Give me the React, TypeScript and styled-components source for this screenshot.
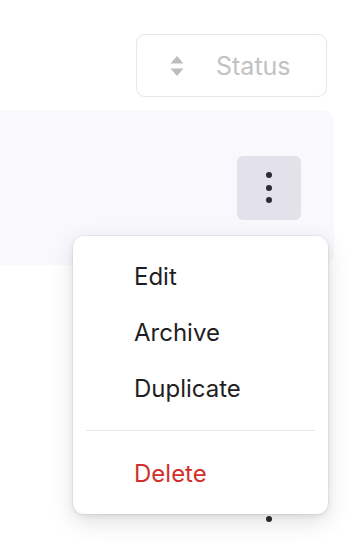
import React from "react";
import styled, { createGlobalStyle } from "styled-components";

const GlobalStyle = createGlobalStyle`
    body {
        margin: 0;
        background: #ffffff;
        font-family: Inter, "Noto Sans", sans-serif;
    }
`;

const MENU_ITEMS = ["Edit", "Archive", "Duplicate"];

const SortIcon = () => (
    <svg width="16" height="24" viewBox="0 0 16 24">
        <path d="M8 2 L14.5 9.5 H1.5 Z" fill="#bdbdbd" />
        <path d="M8 22 L14.5 14.5 H1.5 Z" fill="#bdbdbd" />
    </svg>
);

const App = () => {
    return (
        <React.Fragment>
            <GlobalStyle />
            <Page>
                <Toolbar>
                    <StatusButton type="button">
                        <SortIcon />
                        <span>Status</span>
                    </StatusButton>
                </Toolbar>

                <RowList>
                    <Row $active>
                        <KebabWrap>
                            <KebabButton type="button" $active aria-label="Row actions">
                                <Dot />
                                <Dot />
                                <Dot />
                            </KebabButton>
                            <Menu>
                                {MENU_ITEMS.map((label) => (
                                    <MenuItem key={label}>{label}</MenuItem>
                                ))}
                                <Separator />
                                <MenuItem $danger>Delete</MenuItem>
                            </Menu>
                        </KebabWrap>
                    </Row>
                    <Row>
                        <KebabWrap>
                            <KebabButton type="button" aria-label="Row actions">
                                <Dot />
                                <Dot />
                                <Dot />
                            </KebabButton>
                        </KebabWrap>
                    </Row>
                </RowList>
            </Page>
        </React.Fragment>
    );
};

export default App;

const Page = styled.div`
    width: 364px;
    height: 552px;
    overflow: hidden;
    padding-top: 34px;
    box-sizing: border-box;
`;

const Toolbar = styled.div`
    display: flex;
    justify-content: flex-end;
    padding-right: 37px;
`;

const StatusButton = styled.button`
    display: flex;
    align-items: center;
    gap: 31px;
    width: 191px;
    height: 63px;
    padding: 0 0 0 32px;
    box-sizing: border-box;
    border: 1px solid #e6e6e6;
    border-radius: 9px;
    background: #ffffff;
    color: #c2c2c2;
    font-family: Inter, "Noto Sans", sans-serif;
    font-size: 25px;
    cursor: pointer;
`;

const RowList = styled.div`
    display: flex;
    flex-direction: column;
    gap: 164px;
    margin-top: 13px;
    width: 334px;
`;

const Row = styled.div<{ $active?: boolean }>`
    display: flex;
    justify-content: flex-end;
    align-items: center;
    height: 155px;
    padding-right: 33px;
    box-sizing: border-box;
    background: ${({ $active }) => ($active ? "#f9f8fd" : "transparent")};
    border-radius: 0 12px 12px 0;
`;

const KebabWrap = styled.div`
    position: relative;
`;

const KebabButton = styled.button<{ $active?: boolean }>`
    display: flex;
    flex-direction: column;
    align-items: center;
    justify-content: center;
    gap: 6.5px;
    width: 64px;
    height: 64px;
    padding: 0;
    border: none;
    border-radius: 6px;
    background: ${({ $active }) => ($active ? "#e3e2eb" : "transparent")};
    cursor: pointer;
`;

const Dot = styled.span`
    width: 6px;
    height: 6px;
    border-radius: 50%;
    background: #2b2b33;
`;

const Menu = styled.div`
    position: absolute;
    top: 80px;
    right: -27px;
    z-index: 2;
    width: 255px;
    padding: 12px 0 13px;
    box-sizing: border-box;
    background: #ffffff;
    border-radius: 11px;
    box-shadow: 0 0 0 1px rgba(0, 0, 0, 0.04), 0 8px 24px rgba(0, 0, 0, 0.12),
        0 2px 6px rgba(0, 0, 0, 0.08);
`;

const MenuItem = styled.div<{ $danger?: boolean }>`
    display: flex;
    align-items: center;
    height: 56px;
    padding-left: 61px;
    padding-top: 1px;
    box-sizing: border-box;
    font-size: 24px;
    color: ${({ $danger }) => ($danger ? "#d0312d" : "#1f1f24")};
    cursor: pointer;
`;

const Separator = styled.div`
    height: 1px;
    margin: 14px 13px;
    background: #e6e6e9;
`;
